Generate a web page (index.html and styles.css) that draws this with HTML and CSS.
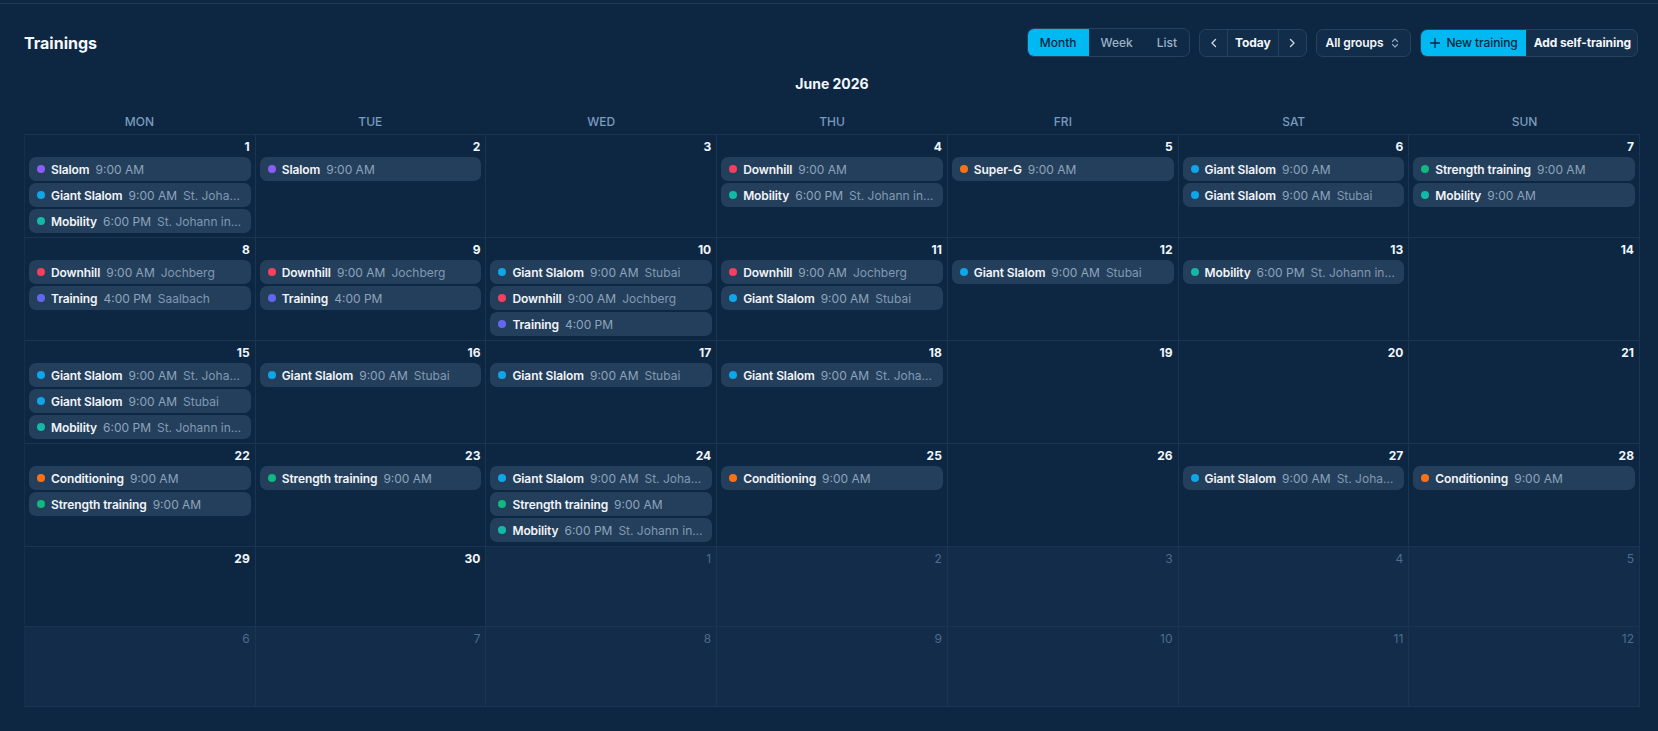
FILE: index.html
```html
<!DOCTYPE html>
<html lang="en">
<head>
<meta charset="utf-8">
<title>Trainings</title>
<link rel="stylesheet" href="styles.css">
</head>
<body>
<div class="topbar"></div>
<main class="page">
  <header class="header">
    <h1 class="title">Trainings</h1>
    <div class="controls">
      <div class="seg">
        <span class="seg-item active">Month</span>
        <span class="seg-item">Week</span>
        <span class="seg-item">List</span>
      </div>
      <div class="nav">
        <span class="nav-btn"><svg width="8" height="10" viewBox="0 0 8 10"><path d="M5.5 1.5 2 5l3.5 3.5" fill="none" stroke="#c9d6e3" stroke-width="1.4" stroke-linecap="round" stroke-linejoin="round"/></svg></span>
        <span class="nav-today">Today</span>
        <span class="nav-btn"><svg width="8" height="10" viewBox="0 0 8 10"><path d="M2.5 1.5 6 5 2.5 8.5" fill="none" stroke="#c9d6e3" stroke-width="1.4" stroke-linecap="round" stroke-linejoin="round"/></svg></span>
      </div>
      <div class="select">
        <span>All groups</span>
        <svg width="8" height="12" viewBox="0 0 8 12"><path d="M1.5 4.5 4 2l2.5 2.5M1.5 7.5 4 10l2.5-2.5" fill="none" stroke="#8ea4ba" stroke-width="1.2" stroke-linecap="round" stroke-linejoin="round"/></svg>
      </div>
      <div class="actions">
        <span class="btn-primary"><svg width="10" height="10" viewBox="0 0 10 10"><path d="M5 0.5v9M0.5 5h9" stroke="#0b2540" stroke-width="1.3" stroke-linecap="round"/></svg>New training</span>
        <span class="btn-secondary">Add self-training</span>
      </div>
    </div>
  </header>

  <h2 class="month-title">June 2026</h2>

  <div class="weekdays">
    <span>MON</span><span>TUE</span><span>WED</span><span>THU</span><span>FRI</span><span>SAT</span><span>SUN</span>
  </div>

  <div class="grid">
    <!-- Week 1 -->
    <div class="cell"><div class="num">1</div><div class="events">
      <div class="ev"><i class="dot purple"></i><b>Slalom</b><span class="time">9:00 AM</span></div>
      <div class="ev"><i class="dot blue"></i><b>Giant Slalom</b><span class="time">9:00 AM</span><span class="loc">St. Johann in Tirol</span></div>
      <div class="ev"><i class="dot teal"></i><b>Mobility</b><span class="time">6:00 PM</span><span class="loc">St. Johann in Tirol</span></div>
    </div></div>
    <div class="cell"><div class="num">2</div><div class="events">
      <div class="ev"><i class="dot purple"></i><b>Slalom</b><span class="time">9:00 AM</span></div>
    </div></div>
    <div class="cell"><div class="num">3</div></div>
    <div class="cell"><div class="num">4</div><div class="events">
      <div class="ev"><i class="dot red"></i><b>Downhill</b><span class="time">9:00 AM</span></div>
      <div class="ev"><i class="dot teal"></i><b>Mobility</b><span class="time">6:00 PM</span><span class="loc">St. Johann in Tirol</span></div>
    </div></div>
    <div class="cell"><div class="num">5</div><div class="events">
      <div class="ev"><i class="dot orange"></i><b>Super-G</b><span class="time">9:00 AM</span></div>
    </div></div>
    <div class="cell"><div class="num">6</div><div class="events">
      <div class="ev"><i class="dot blue"></i><b>Giant Slalom</b><span class="time">9:00 AM</span></div>
      <div class="ev"><i class="dot blue"></i><b>Giant Slalom</b><span class="time">9:00 AM</span><span class="loc">Stubai</span></div>
    </div></div>
    <div class="cell"><div class="num">7</div><div class="events">
      <div class="ev"><i class="dot green"></i><b>Strength training</b><span class="time">9:00 AM</span></div>
      <div class="ev"><i class="dot teal"></i><b>Mobility</b><span class="time">9:00 AM</span></div>
    </div></div>

    <!-- Week 2 -->
    <div class="cell"><div class="num">8</div><div class="events">
      <div class="ev"><i class="dot red"></i><b>Downhill</b><span class="time">9:00 AM</span><span class="loc">Jochberg</span></div>
      <div class="ev"><i class="dot indigo"></i><b>Training</b><span class="time">4:00 PM</span><span class="loc">Saalbach</span></div>
    </div></div>
    <div class="cell"><div class="num">9</div><div class="events">
      <div class="ev"><i class="dot red"></i><b>Downhill</b><span class="time">9:00 AM</span><span class="loc">Jochberg</span></div>
      <div class="ev"><i class="dot indigo"></i><b>Training</b><span class="time">4:00 PM</span></div>
    </div></div>
    <div class="cell"><div class="num">10</div><div class="events">
      <div class="ev"><i class="dot blue"></i><b>Giant Slalom</b><span class="time">9:00 AM</span><span class="loc">Stubai</span></div>
      <div class="ev"><i class="dot red"></i><b>Downhill</b><span class="time">9:00 AM</span><span class="loc">Jochberg</span></div>
      <div class="ev"><i class="dot indigo"></i><b>Training</b><span class="time">4:00 PM</span></div>
    </div></div>
    <div class="cell"><div class="num">11</div><div class="events">
      <div class="ev"><i class="dot red"></i><b>Downhill</b><span class="time">9:00 AM</span><span class="loc">Jochberg</span></div>
      <div class="ev"><i class="dot blue"></i><b>Giant Slalom</b><span class="time">9:00 AM</span><span class="loc">Stubai</span></div>
    </div></div>
    <div class="cell"><div class="num">12</div><div class="events">
      <div class="ev"><i class="dot blue"></i><b>Giant Slalom</b><span class="time">9:00 AM</span><span class="loc">Stubai</span></div>
    </div></div>
    <div class="cell"><div class="num">13</div><div class="events">
      <div class="ev"><i class="dot teal"></i><b>Mobility</b><span class="time">6:00 PM</span><span class="loc">St. Johann in Tirol</span></div>
    </div></div>
    <div class="cell"><div class="num">14</div></div>

    <!-- Week 3 -->
    <div class="cell"><div class="num">15</div><div class="events">
      <div class="ev"><i class="dot blue"></i><b>Giant Slalom</b><span class="time">9:00 AM</span><span class="loc">St. Johann in Tirol</span></div>
      <div class="ev"><i class="dot blue"></i><b>Giant Slalom</b><span class="time">9:00 AM</span><span class="loc">Stubai</span></div>
      <div class="ev"><i class="dot teal"></i><b>Mobility</b><span class="time">6:00 PM</span><span class="loc">St. Johann in Tirol</span></div>
    </div></div>
    <div class="cell"><div class="num">16</div><div class="events">
      <div class="ev"><i class="dot blue"></i><b>Giant Slalom</b><span class="time">9:00 AM</span><span class="loc">Stubai</span></div>
    </div></div>
    <div class="cell"><div class="num">17</div><div class="events">
      <div class="ev"><i class="dot blue"></i><b>Giant Slalom</b><span class="time">9:00 AM</span><span class="loc">Stubai</span></div>
    </div></div>
    <div class="cell"><div class="num">18</div><div class="events">
      <div class="ev"><i class="dot blue"></i><b>Giant Slalom</b><span class="time">9:00 AM</span><span class="loc">St. Johann in Tirol</span></div>
    </div></div>
    <div class="cell"><div class="num">19</div></div>
    <div class="cell"><div class="num">20</div></div>
    <div class="cell"><div class="num">21</div></div>

    <!-- Week 4 -->
    <div class="cell"><div class="num">22</div><div class="events">
      <div class="ev"><i class="dot orange"></i><b>Conditioning</b><span class="time">9:00 AM</span></div>
      <div class="ev"><i class="dot green"></i><b>Strength training</b><span class="time">9:00 AM</span></div>
    </div></div>
    <div class="cell"><div class="num">23</div><div class="events">
      <div class="ev"><i class="dot green"></i><b>Strength training</b><span class="time">9:00 AM</span></div>
    </div></div>
    <div class="cell"><div class="num">24</div><div class="events">
      <div class="ev"><i class="dot blue"></i><b>Giant Slalom</b><span class="time">9:00 AM</span><span class="loc">St. Johann in Tirol</span></div>
      <div class="ev"><i class="dot green"></i><b>Strength training</b><span class="time">9:00 AM</span></div>
      <div class="ev"><i class="dot teal"></i><b>Mobility</b><span class="time">6:00 PM</span><span class="loc">St. Johann in Tirol</span></div>
    </div></div>
    <div class="cell"><div class="num">25</div><div class="events">
      <div class="ev"><i class="dot orange"></i><b>Conditioning</b><span class="time">9:00 AM</span></div>
    </div></div>
    <div class="cell"><div class="num">26</div></div>
    <div class="cell"><div class="num">27</div><div class="events">
      <div class="ev"><i class="dot blue"></i><b>Giant Slalom</b><span class="time">9:00 AM</span><span class="loc">St. Johann in Tirol</span></div>
    </div></div>
    <div class="cell"><div class="num">28</div><div class="events">
      <div class="ev"><i class="dot orange"></i><b>Conditioning</b><span class="time">9:00 AM</span></div>
    </div></div>

    <!-- Week 5 -->
    <div class="cell"><div class="num">29</div></div>
    <div class="cell"><div class="num">30</div></div>
    <div class="cell other"><div class="num">1</div></div>
    <div class="cell other"><div class="num">2</div></div>
    <div class="cell other"><div class="num">3</div></div>
    <div class="cell other"><div class="num">4</div></div>
    <div class="cell other"><div class="num">5</div></div>

    <!-- Week 6 -->
    <div class="cell other"><div class="num">6</div></div>
    <div class="cell other"><div class="num">7</div></div>
    <div class="cell other"><div class="num">8</div></div>
    <div class="cell other"><div class="num">9</div></div>
    <div class="cell other"><div class="num">10</div></div>
    <div class="cell other"><div class="num">11</div></div>
    <div class="cell other"><div class="num">12</div></div>
  </div>
</main>
</body>
</html>
```

FILE: styles.css
```css
* { box-sizing: border-box; }

html, body {
  margin: 0;
  background: #0d2743;
  color: #ffffff;
  font-family: Inter, "Noto Sans", "Liberation Sans", sans-serif;
}

.topbar {
  height: 4px;
  border-bottom: 1px solid #1f3b58;
}

.page {
  padding: 24px 18px 0 24px;
}

.header {
  display: flex;
  align-items: center;
  justify-content: space-between;
  height: 29px;
}

.title {
  margin: 0;
  font-size: 16px;
  font-weight: 700;
  color: #f3f7fb;
}

.controls {
  display: flex;
  align-items: center;
  gap: 9px;
  margin-right: 2px;
}

.seg {
  display: flex;
  height: 29px;
  border: 1px solid #27425e;
  border-radius: 7px;
  overflow: hidden;
  background: #0f2a46;
}

.seg-item {
  display: flex;
  align-items: center;
  padding: 0 12px;
  font-size: 12px;
  font-weight: 500;
  color: #9db2c8;
}

.seg-item.active {
  background: #00b9f2;
  color: #0b2540;
}

.nav {
  display: flex;
  height: 28px;
  border: 1px solid #27425e;
  border-radius: 7px;
  background: #112d4a;
  overflow: hidden;
}

.nav-btn {
  display: flex;
  align-items: center;
  justify-content: center;
  width: 27px;
}

.nav-today {
  display: flex;
  align-items: center;
  padding: 0 7px;
  font-size: 12px;
  font-weight: 700;
  color: #f3f7fb;
  letter-spacing: -0.1px;
  border-left: 1px solid #27425e;
  border-right: 1px solid #27425e;
}

.select {
  display: flex;
  align-items: center;
  gap: 8px;
  height: 28px;
  padding: 0 11px 0 9px;
  border: 1px solid #27425e;
  border-radius: 7px;
  background: #112d4a;
  font-size: 12px;
  font-weight: 600;
  color: #f3f7fb;
  letter-spacing: -0.1px;
}

.actions {
  display: flex;
  height: 28px;
  border: 1px solid #27425e;
  border-radius: 7px;
  background: #132f4c;
  overflow: hidden;
}

.btn-primary {
  display: flex;
  align-items: center;
  gap: 6px;
  padding: 0 8px 0 9px;
  background: #00b9f2;
  color: #0b2540;
  font-size: 12px;
  font-weight: 500;
  letter-spacing: -0.1px;
}

.btn-secondary {
  display: flex;
  align-items: center;
  padding: 0 6px 0 8px;
  font-size: 12px;
  font-weight: 700;
  color: #f3f7fb;
  letter-spacing: -0.1px;
}

.month-title {
  margin: 18px 0 0;
  line-height: 18px;
  text-align: center;
  font-size: 14px;
  font-weight: 700;
  color: #f3f7fb;
}

.weekdays {
  display: grid;
  grid-template-columns: repeat(7, 1fr);
  margin-top: 15px;
  height: 26px;
  align-items: center;
  text-align: center;
  font-size: 12px;
  font-weight: 500;
  color: #7b9bbd;
}

.grid {
  display: grid;
  grid-template-columns: repeat(7, minmax(0, 1fr));
  border-top: 1px solid #1a3551;
  border-left: 1px solid #152f4b;
}

.cell {
  min-height: 80px;
  padding: 4px 4px 4px;
  border-right: 1px solid #1a3551;
  border-bottom: 1px solid #1a3551;
  min-width: 0;
}

.cell.other {
  background: #122c49;
}

.num {
  height: 16px;
  line-height: 16px;
  text-align: right;
  font-size: 12px;
  font-weight: 700;
  color: #f3f7fb;
  padding-right: 1px;
}

.cell.other .num {
  font-weight: 400;
  color: #4d6d8e;
}

.events {
  display: flex;
  flex-direction: column;
  gap: 2px;
  margin-top: 2px;
}

.ev {
  display: flex;
  align-items: center;
  gap: 6px;
  height: 24px;
  padding: 0 8px;
  border-radius: 7px;
  background: #243f5c;
  font-size: 12px;
  white-space: nowrap;
  overflow: hidden;
  min-width: 0;
}

.ev b {
  font-weight: 600;
  color: #f1f5f9;
  flex-shrink: 0;
  letter-spacing: -0.1px;
}

.ev .time {
  color: #8ea4bb;
  flex-shrink: 0;
}

.ev .loc {
  color: #8199b1;
  overflow: hidden;
  text-overflow: ellipsis;
  min-width: 0;
}

.dot {
  width: 8px;
  height: 8px;
  border-radius: 50%;
  flex-shrink: 0;
}

.dot.purple { background: #8b5cf6; }
.dot.blue { background: #0ea5e9; }
.dot.teal { background: #14b8a6; }
.dot.green { background: #10b981; }
.dot.red { background: #f43f5e; }
.dot.orange { background: #f97316; }
.dot.indigo { background: #6366f1; }
```
